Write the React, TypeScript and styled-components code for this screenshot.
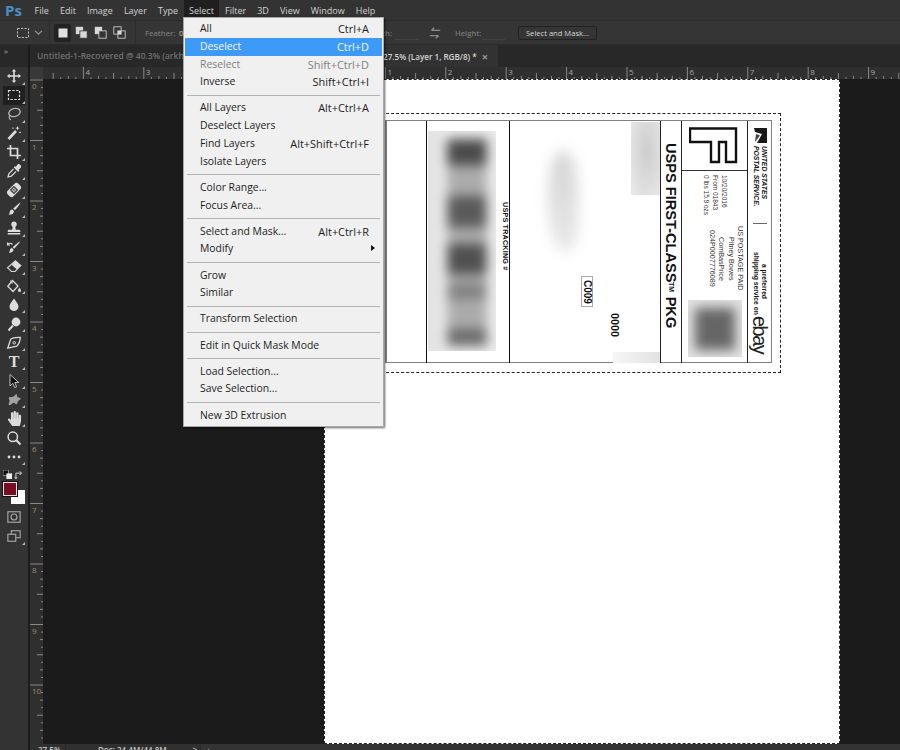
import React from 'react';
import styled, { createGlobalStyle } from 'styled-components';
import { FaHandPaper } from 'react-icons/fa';

const UI_FONT = `"Open Sans", "Noto Sans", "Liberation Sans", sans-serif`;
const LABEL_FONT = `"Liberation Sans", Arial, sans-serif`;

const GlobalStyle = createGlobalStyle`
  html, body {
    margin: 0;
    padding: 0;
    background: #1b1b1b;
    overflow: hidden;
  }
`;

const Screen = styled.div`
  position: relative;
  width: 900px;
  height: 750px;
  overflow: hidden;
  display: flex;
  flex-direction: column;
  background: #1b1b1b;
  font-family: ${UI_FONT};
`;

/* menu bar */
const MenuBar = styled.div`
  height: 20px;
  flex: none;
  display: flex;
  align-items: center;
  background: #333;
  border-bottom: 1px solid #2a2a2a;
`;
const PsLogo = styled.div`
  width: 29px;
  padding-left: 5px;
  box-sizing: border-box;
  color: #4a8fc7;
  font: bold 15px/20px "Open Sans", sans-serif;
`;
const MenuTitle = styled.div<{ $open?: boolean }>`
  padding: 0 5.55px;
  height: 20px;
  line-height: 21px;
  font-size: 9px;
  color: #d2d2d2;
  background: ${p => (p.$open ? '#1f1f1f' : 'transparent')};
`;

/* options bar */
const OptionsBar = styled.div`
  height: 24px;
  flex: none;
  display: flex;
  align-items: center;
  background: #353535;
  border-bottom: 1px solid #2b2b2b;
  box-sizing: border-box;
`;
const OptionDivider = styled.span<{ $left: number }>`
  width: 1px;
  height: 23px;
  margin-left: ${p => p.$left}px;
  background: #2d2d2d;
  flex: none;
`;
const OptionIcon = styled.div<{ $active?: boolean; $left?: number }>`
  width: 17px;
  height: 18px;
  margin-left: ${p => p.$left ?? 2}px;
  display: flex;
  align-items: center;
  justify-content: center;
  background: ${p => (p.$active ? '#222' : 'transparent')};
  border-radius: 2px;
  flex: none;
`;
const OptionLabel = styled.span<{ $left: number; $width: number; $end?: boolean; $lit?: boolean }>`
  margin-left: ${p => p.$left}px;
  width: ${p => p.$width}px;
  font-size: 7.6px;
  font-weight: 600;
  text-align: ${p => (p.$end ? 'right' : 'left')};
  color: ${p => (p.$lit ? '#b9a37e' : '#777')};
  flex: none;
`;
const OptionField = styled.span<{ $left: number; $width: number }>`
  margin-left: ${p => p.$left}px;
  width: ${p => p.$width}px;
  height: 14px;
  border-bottom: 1px solid #444;
  flex: none;
`;
const OptionButton = styled.div`
  margin-left: 13px;
  width: 79px;
  height: 14px;
  box-sizing: border-box;
  border: 1px solid #222;
  border-radius: 2px;
  font-size: 7.6px;
  line-height: 12px;
  text-align: center;
  color: #d6d6d6;
  flex: none;
`;

/* workspace */
const Workspace = styled.div`
  flex: 1;
  display: flex;
  min-height: 0;
`;
const Toolbox = styled.div`
  width: 28px;
  flex: none;
  background: #333;
  display: flex;
  flex-direction: column;
`;
const ToolboxHead = styled.div`
  height: 21.5px;
  flex: none;
  background: #282828;
  color: #aaa;
  font-size: 8px;
  line-height: 11px;
  padding-left: 4px;
  box-sizing: border-box;
`;
const Tool = styled.div<{ $active?: boolean; $more?: boolean }>`
  position: relative;
  height: 19.05px;
  margin: 0 3px;
  display: flex;
  align-items: center;
  justify-content: center;
  background: ${p => (p.$active ? '#1f1f1f' : 'transparent')};
  color: #dcdcdc;
  &::after {
    content: '';
    display: ${p => (p.$more ? 'block' : 'none')};
    position: absolute;
    right: 0;
    bottom: 1px;
    border-left: 3px solid transparent;
    border-bottom: 3px solid #bbb;
  }
`;
const TypeGlyph = styled.span`
  font: bold 16px/16px "Liberation Serif", serif;
  color: #dcdcdc;
`;
const SwatchTools = styled.div`
  height: 11px;
  margin: 3px 3px 0;
  display: flex;
  justify-content: space-between;
  align-items: center;
  padding-right: 1px;
`;
const Swatches = styled.div`
  position: relative;
  height: 24px;
  margin: 2px 0 1px;
`;
const Swatch = styled.div<{ $fg?: boolean }>`
  position: absolute;
  width: 14px;
  height: 14px;
  box-sizing: border-box;
  left: ${p => (p.$fg ? 3 : 11)}px;
  top: ${p => (p.$fg ? 0 : 8)}px;
  background: ${p => (p.$fg ? '#7a0c22' : '#fff')};
  border: 1px solid ${p => (p.$fg ? '#e0e0e0' : '#fff')};
  outline: ${p => (p.$fg ? '1px solid #111' : 'none')};
`;
const DocumentArea = styled.div`
  flex: 1;
  min-width: 0;
  margin-left: 2px;
  display: flex;
  flex-direction: column;
`;
const TabBar = styled.div`
  height: 22px;
  flex: none;
  display: flex;
  background: #282828;
`;
const InactiveTab = styled.div`
  width: 153px;
  padding-left: 7px;
  box-sizing: border-box;
  font-size: 8.5px;
  font-weight: 600;
  line-height: 22px;
  color: #707070;
  white-space: nowrap;
  overflow: hidden;
`;
const ActiveTab = styled.div`
  width: 315px;
  padding-right: 10px;
  box-sizing: border-box;
  display: flex;
  justify-content: flex-end;
  align-items: center;
  gap: 5px;
  background: #323232;
  font-size: 8.1px;
  font-weight: 600;
  color: #d4d4d4;
  white-space: nowrap;
  overflow: hidden;
`;
const TabClose = styled.span`
  color: #999;
  font-size: 11px;
  font-weight: 700;
`;
const RulerTop = styled.svg`
  display: block;
  flex: none;
  background: #2f2f2f;
`;
const CanvasRow = styled.div`
  flex: none;
  height: 665px;
  display: flex;
`;
const RulerSide = styled.svg`
  display: block;
  flex: none;
  background: #2f2f2f;
`;
const Pasteboard = styled.div`
  flex: 1;
  background: #1b1b1b;
  padding-left: 281px;
`;
const Page = styled.div`
  width: 516px;
  height: 665px;
  box-sizing: border-box;
  background: #fff;
  border: 1px dashed #222;
  padding: 33px 0 0 51px;
`;
const Selection = styled.div`
  width: 405px;
  height: 260px;
  box-sizing: border-box;
  border: 1px dashed #222;
  padding: 6px 8px 8px 8px;
`;
const ShippingLabel = styled.div`
  width: 387px;
  height: 243px;
  box-sizing: border-box;
  display: grid;
  grid-template-columns: 39px 83px 151px 21px 66px 25px;
  border: 1px solid #808080;
  border-left-width: 2px;
  font-family: ${LABEL_FONT};
  color: #111;
`;
const LabelCell = styled.div<{ $line?: string }>`
  position: relative;
  min-width: 0;
  border-left: ${p => (p.$line ? `1.5px solid ${p.$line}` : 'none')};
  box-sizing: border-box;
`;
const BarcodeCell = styled(LabelCell)`
  display: flex;
  padding: 10px 0 12px 1px;
`;
const BarcodeSmear = styled.div`
  width: 69px;
  height: 220px;
  background: linear-gradient(90deg, #e2e2e2, #ececec 30%, #ececec);
  overflow: hidden;
  padding: 8px 0 0 19px;
  box-sizing: border-box;
`;
const SmearStrip = styled.div`
  width: 40px;
  height: 208px;
  background: #ababab;
  filter: blur(6px);
  display: flex;
  flex-direction: column;
`;
const SmearBand = styled.div<{ $h: number; $gap: number; $tone: string }>`
  height: ${p => p.$h}px;
  margin-bottom: ${p => p.$gap}px;
  background: ${p => p.$tone};
  flex: none;
`;
const TrackingLabel = styled.div`
  writing-mode: vertical-rl;
  font-size: 7.2px;
  font-weight: 700;
  line-height: 8px;
  letter-spacing: 0.2px;
  margin: 71px 0 0 5px;
  white-space: nowrap;
`;
const AddressCell = styled(LabelCell)`
  display: flex;
`;
const AddressSmear = styled.div`
  width: 30px;
  height: 100px;
  margin: 30px 0 0 38px;
  flex: none;
  background: linear-gradient(#d4d4d4, #e8e8e8);
  filter: blur(7px);
  border-radius: 45% 45% 30% 50%;
`;
const RouteCode = styled.div`
  writing-mode: vertical-rl;
  margin: 155px 0 0 3px;
  width: 12px;
  height: 31px;
  box-sizing: border-box;
  border: 1px solid #aaa;
  font-size: 10px;
  font-weight: 700;
  line-height: 10px;
  text-align: center;
  flex: none;
`;
const ZeroCode = styled.div`
  writing-mode: vertical-rl;
  margin: 192px 0 0 17px;
  font-size: 10.8px;
  font-weight: 700;
  line-height: 10px;
  flex: none;
`;
const RedactionStack = styled.div`
  margin-left: auto;
  width: 30px;
  flex: none;
  display: flex;
  flex-direction: column;
  justify-content: space-between;
  align-items: flex-end;
  padding-top: 1px;
`;
const TopRedaction = styled.div`
  width: 29px;
  height: 73px;
  flex: none;
  background: radial-gradient(ellipse at 55% 40%, #cdcdcd, #eaeaea);
`;
const BottomRedaction = styled.div`
  width: 47px;
  height: 11px;
  flex: none;
  background: linear-gradient(90deg, #f6f6f6, #e2e2e2);
`;
const ClassCell = styled(LabelCell)`
  display: flex;
  justify-content: center;
  padding-top: 22px;
`;
const ClassText = styled.div`
  writing-mode: vertical-rl;
  font-size: 14.6px;
  font-weight: 700;
  line-height: 20px;
  white-space: nowrap;
  & sup {
    font-size: 7px;
    line-height: 0;
    vertical-align: baseline;
    margin: 0 3px;
  }
`;
const PostageCell = styled(LabelCell)`
  display: flex;
  flex-direction: column;
`;
const PermitBox = styled.div`
  height: 50px;
  flex: none;
  box-sizing: border-box;
  border-bottom: 1px solid #333;
  padding: 6px 0 0 7px;
`;
const DateLines = styled.div`
  writing-mode: vertical-rl;
  align-self: flex-end;
  height: 35px;
  margin: 4px 18px 0 0;
  font-size: 6.5px;
  line-height: 9px;
  white-space: nowrap;
  color: #333;
`;
const PostageLines = styled.div`
  writing-mode: vertical-rl;
  align-self: flex-end;
  height: 67px;
  margin: 15px 2px 0 0;
  font-size: 7.2px;
  line-height: 9.3px;
  text-align: center;
  white-space: nowrap;
  color: #333;
`;
const PostageSmear = styled.div`
  width: 54px;
  height: 57px;
  margin: 8px 0 0 6px;
  flex: none;
  background: #e2e2e2;
  overflow: hidden;
`;
const PostageBlur = styled.div`
  width: 40px;
  height: 42px;
  margin: 8px 0 0 7px;
  background: #666;
  filter: blur(6px);
`;
const BrandCell = styled(LabelCell)`
  display: flex;
  flex-direction: column;
  align-items: center;
  padding-top: 7px;
`;
const BrandText = styled.div`
  writing-mode: vertical-rl;
  font-size: 6.8px;
  font-style: italic;
  font-weight: 700;
  line-height: 7.5px;
  margin-top: 3px;
  white-space: nowrap;
`;
const BrandRule = styled.div`
  width: 14px;
  height: 1px;
  margin-top: 16px;
  background: #666;
  flex: none;
`;
const PreferredText = styled.div`
  writing-mode: vertical-rl;
  font-size: 6.7px;
  font-weight: 700;
  line-height: 8px;
  height: 60px;
  margin-top: 28px;
  text-align: center;
  white-space: nowrap;
`;
const EbayMark = styled.div`
  writing-mode: vertical-rl;
  font-size: 20px;
  line-height: 18px;
  letter-spacing: -1.5px;
  margin-top: 4px;
  color: #222;
`;

/* status bar */
const StatusBar = styled.div`
  height: 22px;
  flex: none;
  display: flex;
  font-size: 8px;
  font-weight: 600;
  line-height: 11px;
  color: #c8c8c8;
  background: #333;
`;
const ZoomCell = styled.div`
  width: 36px;
  padding-left: 8px;
  box-sizing: border-box;
  border-right: 1px solid #2a2a2a;
  background: #303030;
  flex: none;
`;
const DocCell = styled.div`
  width: 135px;
  display: flex;
  justify-content: space-between;
  padding: 0 3px 0 32px;
  box-sizing: border-box;
  border-right: 1px solid #2a2a2a;
  background: #303030;
  flex: none;
`;
const ScrollCue = styled.span`
  margin-left: 6px;
  color: #999;
`;

/* select menu */
const DropMenu = styled.div`
  position: absolute;
  left: 183px;
  top: 17px;
  width: 201px;
  box-sizing: border-box;
  padding: 2px 1px 2px;
  background: #f0f0f0;
  border: 1px solid #a8a8a8;
  box-shadow: 1px 1px 2px rgba(0, 0, 0, 0.6);
  font-size: 10.4px;
  z-index: 5;
`;
const DropRow = styled.div<{ $hot?: boolean; $off?: boolean }>`
  position: relative;
  height: 17.75px;
  line-height: 17.75px;
  display: flex;
  justify-content: space-between;
  padding: 0 13px 0 15px;
  background: ${p => (p.$hot ? '#3d9bf7' : 'transparent')};
  color: ${p => (p.$hot ? '#f4f9ff' : p.$off ? '#808080' : '#1c1c1c')};
  white-space: nowrap;
`;
const DropKey = styled.span`
  font-size: 10.9px;
`;
const DropSep = styled.div`
  height: 1px;
  margin: 4px 2px 3.4px 2px;
  background: #b4b4b4;
`;
const SubArrow = styled.span`
  position: absolute;
  right: 7px;
  top: 5px;
  border-left: 4px solid #111;
  border-top: 3.5px solid transparent;
  border-bottom: 3.5px solid transparent;
`;

const MENUS = ['File', 'Edit', 'Image', 'Layer', 'Type', 'Select', 'Filter', '3D', 'View', 'Window', 'Help'];

type DropItem = { label: string; key?: string; hot?: boolean; off?: boolean; sub?: boolean } | 'sep';

const DROP_ITEMS: DropItem[] = [
  { label: 'All', key: 'Ctrl+A' },
  { label: 'Deselect', key: 'Ctrl+D', hot: true },
  { label: 'Reselect', key: 'Shift+Ctrl+D', off: true },
  { label: 'Inverse', key: 'Shift+Ctrl+I' },
  'sep',
  { label: 'All Layers', key: 'Alt+Ctrl+A' },
  { label: 'Deselect Layers' },
  { label: 'Find Layers', key: 'Alt+Shift+Ctrl+F' },
  { label: 'Isolate Layers' },
  'sep',
  { label: 'Color Range...' },
  { label: 'Focus Area...' },
  'sep',
  { label: 'Select and Mask...', key: 'Alt+Ctrl+R' },
  { label: 'Modify', sub: true },
  'sep',
  { label: 'Grow' },
  { label: 'Similar' },
  'sep',
  { label: 'Transform Selection' },
  'sep',
  { label: 'Edit in Quick Mask Mode' },
  'sep',
  { label: 'Load Selection...' },
  { label: 'Save Selection...' },
  'sep',
  { label: 'New 3D Extrusion' },
];

const Icon = ({ children, size = 16 }: { children: React.ReactNode; size?: number }) => (
  <svg width={size} height={size} viewBox="0 0 16 16" fill="none">
    {children}
  </svg>
);

const L = '#dcdcdc';

const TOOLS: { icon: React.ReactNode; more?: boolean; active?: boolean }[] = [
  { more: true, icon: <Icon><path fill={L} d="M8 1l2.2 2.6H8.8v3.6h3.6V5.8L15 8l-2.6 2.2V8.8H8.8v3.6h1.4L8 15l-2.2-2.6h1.4V8.8H3.6v1.4L1 8l2.6-2.2v1.4h3.6V3.6H5.8z" /></Icon> },
  { more: true, active: true, icon: <Icon><rect x="2.5" y="3.5" width="11" height="9" stroke={L} strokeWidth="1.2" strokeDasharray="2.4 1.4" /></Icon> },
  { more: true, icon: <Icon><ellipse cx="8.5" cy="6.5" rx="5.8" ry="4" transform="rotate(-15 8.5 6.5)" stroke="#b0b0b0" strokeWidth="1.4" /><path d="M4 9.5c-1.5 1.5-1 3.5 1 4.5" stroke="#b0b0b0" strokeWidth="1.2" /></Icon> },
  { more: true, icon: <Icon><path d="M2.5 14L10 6" stroke={L} strokeWidth="2.6" /><path fill={L} d="M11.5 1l.6 1.6 1.6.6-1.6.6-.6 1.6-.6-1.6L9.3 3.2l1.6-.6zM14 6l.4 1 1 .4-1 .4-.4 1-.4-1-1-.4 1-.4zM7 2l.3.8.8.3-.8.3L7 4.2l-.3-.8-.8-.3.8-.3z" /></Icon> },
  { more: true, icon: <Icon><path d="M4.5 1v10.500H15M1 4.500h10.500V15" stroke={L} strokeWidth="1.7" /></Icon> },
  { more: true, icon: <Icon><path fill={L} d="M11.500 1.500c1-.8 2.200-.2 2.900.5s1 1.900.3 2.800l-2 2 .8.8-1.300 1.300-4.500-4.500 1.300-1.300.8.8z" /><path d="M7.500 6L2.800 10.800 2 14l3.200-.8L10 8.500" stroke={L} strokeWidth="1.2" /></Icon> },
  { more: true, icon: <Icon><g transform="rotate(-45 8 8)"><rect x="0.5" y="4" width="15" height="8" rx="2.8" fill={L} /><rect x="5" y="5" width="6" height="6" fill="#444" /><circle cx="7" cy="7" r=".8" fill={L} /><circle cx="9" cy="9" r=".8" fill={L} /><circle cx="9" cy="7" r=".8" fill={L} /><circle cx="7" cy="9" r=".8" fill={L} /></g></Icon> },
  { more: true, icon: <Icon><path fill={L} d="M14.500 1.500c.3.3-3.500 5.500-5.500 7.800L7.200 7.600C9.400 5.400 14.200 1.200 14.500 1.500z" /><path fill={L} d="M6.400 8.600l1.600 1.700c.1 2-1.800 3.700-5.500 3.500 1.400-1 .9-2.200 1.400-3.600.4-1 1.400-1.600 2.500-1.600z" /></Icon> },
  { more: true, icon: <Icon><path fill={L} d="M8 1.500a2.800 2.800 0 0 1 1.500 5.200c-.2 1 0 2 .3 3h3.200c.8 0 1.300.6 1.300 1.300V12H1.700v-1c0-.7.5-1.300 1.300-1.300h3.200c.3-1 .5-2 .3-3A2.800 2.800 0 0 1 8 1.500z" /><rect x="1.700" y="13" width="12.600" height="1.500" fill={L} /></Icon> },
  { more: true, icon: <Icon><path fill={L} d="M14 2.500c.3.300-3.800 5.200-5.800 7.200L6.700 8.200C8.700 6.200 13.700 2.200 14 2.500z" /><path fill={L} d="M6 9l1.500 1.500c0 1.900-1.700 3.500-4.700 3.300 1-1 .8-2 1.200-3.100.3-1 1.100-1.600 2-1.700z" /><path d="M1.500 5.500c1.500-1.500 3.500-1.500 5 0M1.500 3.500v2.500H4" stroke={L} strokeWidth="1.1" /></Icon> },
  { more: true, icon: <Icon><path d="M9.500 2.800L14.800 7.500 9 13.500H5.500L1.500 9.800z" stroke={L} strokeWidth="1.1" /><path fill={L} d="M9.500 2.800L14.800 7.500 11 11.500 5.600 6.800z" /></Icon> },
  { more: true, icon: <Icon><path d="M6.500 2.500L12 8l-5 5.500L1.800 8.300z" stroke={L} strokeWidth="1.3" /><path d="M4.500 2.500l2 3" stroke={L} strokeWidth="1.1" /><path fill={L} d="M13.500 9.500c.9 1.400 1.500 2.200 1.500 3a1.500 1.500 0 0 1-3 0c0-.8.600-1.600 1.500-3z" /></Icon> },
  { more: true, icon: <Icon><path fill={L} d="M8 1.500c2.500 3.500 4.500 5.500 4.500 8a4.500 4.500 0 0 1-9 0C3.500 7 5.500 5 8 1.500z" /></Icon> },
  { more: true, icon: <Icon><circle cx="10" cy="6" r="4.4" fill={L} /><path d="M7 9.500L2.500 14.500" stroke={L} strokeWidth="2" /></Icon> },
  { more: true, icon: <Icon><path d="M14 2c-3.500 0-7.500.6-9.500 2.500L2 13.500l9-2.500c1.900-2 3-5.500 3-9z" stroke={L} strokeWidth="1.3" transform="rotate(3 8 8)" /><circle cx="8.2" cy="7.8" r="1.3" stroke={L} /></Icon> },
  { more: true, icon: <TypeGlyph>T</TypeGlyph> },
  { more: true, icon: <Icon><path fill="#111" stroke="#cfcfcf" strokeWidth="0.9" d="M4 1.500v11.500l2.800-2.800 1.900 4.300 1.900-.8L8.800 9.500h4z" /></Icon> },
  { more: true, icon: <Icon><path fill="#a2a2a2" d="M2.500 12.500c.3-1.800 1.800-3.200.6-5.200C2.300 5.800 3 4.500 4.800 5c1.500.4 3-.3 4.300-2 .9-1.100 2.200-1 1.900.8-.2 1.300 1 1.700 2.500 2 1.600.3 1.500 1.500.1 2.100-1.600.7-2.100 1.500-2.300 3.100-.2 1.500-1.500 1.500-2.300.4-.9-1.300-2-.8-3.300.6-1.100 1.200-3 1.700-2.700.6z" /></Icon> },
  { more: true, icon: <FaHandPaper size={15} color={L} /> },
  { icon: <Icon><circle cx="6.8" cy="6.8" r="4.7" stroke={L} strokeWidth="1.5" /><path d="M10.300 10.300L14.500 14.500" stroke={L} strokeWidth="2" /></Icon> },
  { more: true, icon: <Icon><circle cx="3" cy="8" r="1.4" fill={L} /><circle cx="8" cy="8" r="1.4" fill={L} /><circle cx="13" cy="8" r="1.4" fill={L} /></Icon> },
];

const MAJOR = 60.4;
const ORIGIN_X = 295;
const TICK_LENGTHS = [13, 2, 3, 2, 6, 2, 3, 2];

const TopRuler = () => {
  const ticks = [];
  for (let i = -36; i < 80; i++) {
    const x = ORIGIN_X + (i * MAJOR) / 8;
    if (x < 0) continue;
    const len = TICK_LENGTHS[((i % 8) + 8) % 8];
    ticks.push(<line key={i} x1={x} x2={x} y1={12 - len} y2={12} stroke="#888" strokeWidth="1" />);
  }
  const labels = [-4, -3, 1, 2, 3, 4, 5, 6, 7, 8, 9];
  return (
    <RulerTop width={870} height={12}>
      <rect x="0" y="0" width="13" height="12" fill="#393939" />
      {ticks}
      {labels.map(n => (
        <text key={n} x={ORIGIN_X + n * MAJOR + 2} y={8} fontSize="8" fontFamily={UI_FONT} fill="#a5a5a5">
          {Math.abs(n)}
        </text>
      ))}
    </RulerTop>
  );
};

const SideRuler = () => {
  const ticks = [];
  for (let i = 0; i < 90; i++) {
    const y = 1 + (i * 60.5) / 8;
    const len = TICK_LENGTHS[i % 8];
    ticks.push(<line key={i} y1={y} y2={y} x1={13 - len} x2={13} stroke="#888" strokeWidth="1" />);
  }
  return (
    <RulerSide width={13} height={665}>
      {ticks}
      {[0, 1, 2, 3, 4, 5, 6, 7, 8, 9, 10].map(n => (
        <text key={n} x={2} y={1 + n * 60.5 + 9} fontSize="8" fontFamily={UI_FONT} fill="#a08a70">
          {n}
        </text>
      ))}
    </RulerSide>
  );
};

const SMEAR_BANDS = [
  { h: 26, gap: 31, tone: '#4a4a4a' },
  { h: 31, gap: 17, tone: '#5a5a5a' },
  { h: 30, gap: 10, tone: '#505050' },
  { h: 15, gap: 30, tone: '#808080' },
  { h: 16, gap: 0, tone: '#6a6a6a' },
];

const App = () => (
  <Screen>
    <GlobalStyle />
    <MenuBar>
      <PsLogo>Ps</PsLogo>
      {MENUS.map(m => (
        <MenuTitle key={m} $open={m === 'Select'}>{m}</MenuTitle>
      ))}
    </MenuBar>

    <OptionsBar>
      <OptionIcon $left={14}>
        <Icon><rect x="2.5" y="3.5" width="11" height="9" stroke="#bbb" strokeDasharray="2.2 1.3" /></Icon>
      </OptionIcon>
      <OptionIcon $left={-1}>
        <Icon size={9}><path d="M2 5l6 6 6-6" stroke="#999" strokeWidth="2" /></Icon>
      </OptionIcon>
      <OptionDivider $left={2} />
      <OptionIcon $left={4} $active>
        <Icon size={12}><rect x="2" y="2" width="12" height="12" fill="#e0e0e0" /></Icon>
      </OptionIcon>
      <OptionIcon>
        <Icon size={13}><rect x="1" y="1" width="9" height="9" fill="#d8d8d8" /><rect x="6" y="6" width="9" height="9" fill="#d8d8d8" stroke="#353535" /></Icon>
      </OptionIcon>
      <OptionIcon>
        <Icon size={13}><rect x="1" y="1" width="9" height="9" fill="#d8d8d8" /><rect x="6" y="6" width="9" height="9" fill="#353535" stroke="#d8d8d8" /></Icon>
      </OptionIcon>
      <OptionIcon>
        <Icon size={13}><rect x="1" y="1" width="9" height="9" stroke="#d8d8d8" /><rect x="6" y="6" width="9" height="9" stroke="#d8d8d8" /><rect x="6" y="6" width="4" height="4" fill="#d8d8d8" /></Icon>
      </OptionIcon>
      <OptionDivider $left={7} />
      <OptionLabel $left={9} $width={34}>Feather:</OptionLabel>
      <OptionLabel $left={0} $width={16} $lit>0 px</OptionLabel>
      <OptionLabel $left={167} $width={30} $end>Width:</OptionLabel>
      <OptionField $left={3} $width={24} />
      <OptionIcon $left={7}>
        <Icon size={14}><path d="M14 5H4M4 5l3-3M2 11h10M12 11l-3 3" stroke="#8a8a8a" strokeWidth="1.7" /></Icon>
      </OptionIcon>
      <OptionLabel $left={12} $width={24}>Height:</OptionLabel>
      <OptionField $left={3} $width={23} />
      <OptionButton>Select and Mask...</OptionButton>
    </OptionsBar>

    <Workspace>
      <Toolbox>
        <ToolboxHead>»</ToolboxHead>
        {TOOLS.map((t, i) => (
          <Tool key={i} $more={t.more} $active={t.active}>{t.icon}</Tool>
        ))}
        <SwatchTools>
          <Icon size={9}><rect x="0" y="0" width="10" height="10" fill="#111" stroke="#ddd" /><rect x="6" y="6" width="10" height="10" fill="#eee" /></Icon>
          <Icon size={10}><path d="M3 14V5h9M12 5L9 2M12 5L9 8M3 14l-2-3M3 14l2-3" stroke="#d0d0d0" strokeWidth="1.6" /></Icon>
        </SwatchTools>
        <Swatches>
          <Swatch />
          <Swatch $fg />
        </Swatches>
        <Tool>
          <Icon size={14}><rect x="1" y="2" width="14" height="12" stroke="#a8a8a8" strokeWidth="1.3" /><circle cx="8" cy="8" r="3.4" stroke="#a8a8a8" strokeWidth="1.3" /></Icon>
        </Tool>
        <Tool $more>
          <Icon size={14}><rect x="5" y="2" width="10" height="8" stroke="#a8a8a8" strokeWidth="1.3" /><rect x="1" y="6" width="9" height="8" fill="#333" stroke="#a8a8a8" strokeWidth="1.3" /></Icon>
        </Tool>
      </Toolbox>

      <DocumentArea>
        <TabBar>
          <InactiveTab>Untitled-1-Recovered @ 40.3% (arkh</InactiveTab>
          <ActiveTab>
            <span>27.5% (Layer 1, RGB/8) *</span>
            <TabClose>×</TabClose>
          </ActiveTab>
        </TabBar>
        <TopRuler />
        <CanvasRow>
          <SideRuler />
          <Pasteboard>
            <Page>
              <Selection>
                <ShippingLabel>
                  <LabelCell />
                  <BarcodeCell $line="#111">
                    <BarcodeSmear>
                      <SmearStrip>
                        {SMEAR_BANDS.map((b, i) => (
                          <SmearBand key={i} $h={b.h} $gap={b.gap} $tone={b.tone} />
                        ))}
                      </SmearStrip>
                    </BarcodeSmear>
                    <TrackingLabel>USPS TRACKING #</TrackingLabel>
                  </BarcodeCell>
                  <AddressCell $line="#111">
                    <AddressSmear />
                    <RouteCode>C009</RouteCode>
                    <ZeroCode>0000</ZeroCode>
                    <RedactionStack>
                      <TopRedaction />
                      <BottomRedaction />
                    </RedactionStack>
                  </AddressCell>
                  <ClassCell $line="#222">
                    <ClassText>USPS FIRST-CLASS<sup>TM</sup> PKG</ClassText>
                  </ClassCell>
                  <PostageCell $line="#222">
                    <PermitBox>
                      <svg width="50" height="40" viewBox="0 0 50 40" fill="none">
                        <path d="M1 1.500H47V35H37V15H30V35H22V15H1z" stroke="#111" strokeWidth="2.4" fill="#fff" />
                      </svg>
                    </PermitBox>
                    <DateLines>10/20/2016<br />From 01843<br />0 lbs 15.9 ozs</DateLines>
                    <PostageLines>US POSTAGE PAID<br />Pitney Bowes<br />ComBasPrice<br />024P0007776089</PostageLines>
                    <PostageSmear>
                      <PostageBlur />
                    </PostageSmear>
                  </PostageCell>
                  <BrandCell $line="#222">
                    <svg width="13" height="15" viewBox="0 0 13 15">
                      <path d="M0 0H13V15H3L8 6 1 4z" fill="#1a1a1a" />
                      <path d="M2 6L6 7.500 1 14z" fill="#444" />
                    </svg>
                    <BrandText>UNITED STATES<br />POSTAL SERVICE.</BrandText>
                    <BrandRule />
                    <PreferredText>a preferred<br />shipping service on</PreferredText>
                    <EbayMark>ebay</EbayMark>
                  </BrandCell>
                </ShippingLabel>
              </Selection>
            </Page>
          </Pasteboard>
        </CanvasRow>
        <StatusBar>
          <ZoomCell>27.5%</ZoomCell>
          <DocCell>
            <span>Doc: 24.4M/44.8M</span>
            <span>&gt;</span>
          </DocCell>
          <ScrollCue>‹</ScrollCue>
        </StatusBar>
      </DocumentArea>
    </Workspace>

    <DropMenu>
      {DROP_ITEMS.map((item, i) =>
        item === 'sep' ? (
          <DropSep key={i} />
        ) : (
          <DropRow key={i} $hot={item.hot} $off={item.off}>
            <span>{item.label}</span>
            {item.key && <DropKey>{item.key}</DropKey>}
            {item.sub && <SubArrow />}
          </DropRow>
        ),
      )}
    </DropMenu>
  </Screen>
);

export default App;
